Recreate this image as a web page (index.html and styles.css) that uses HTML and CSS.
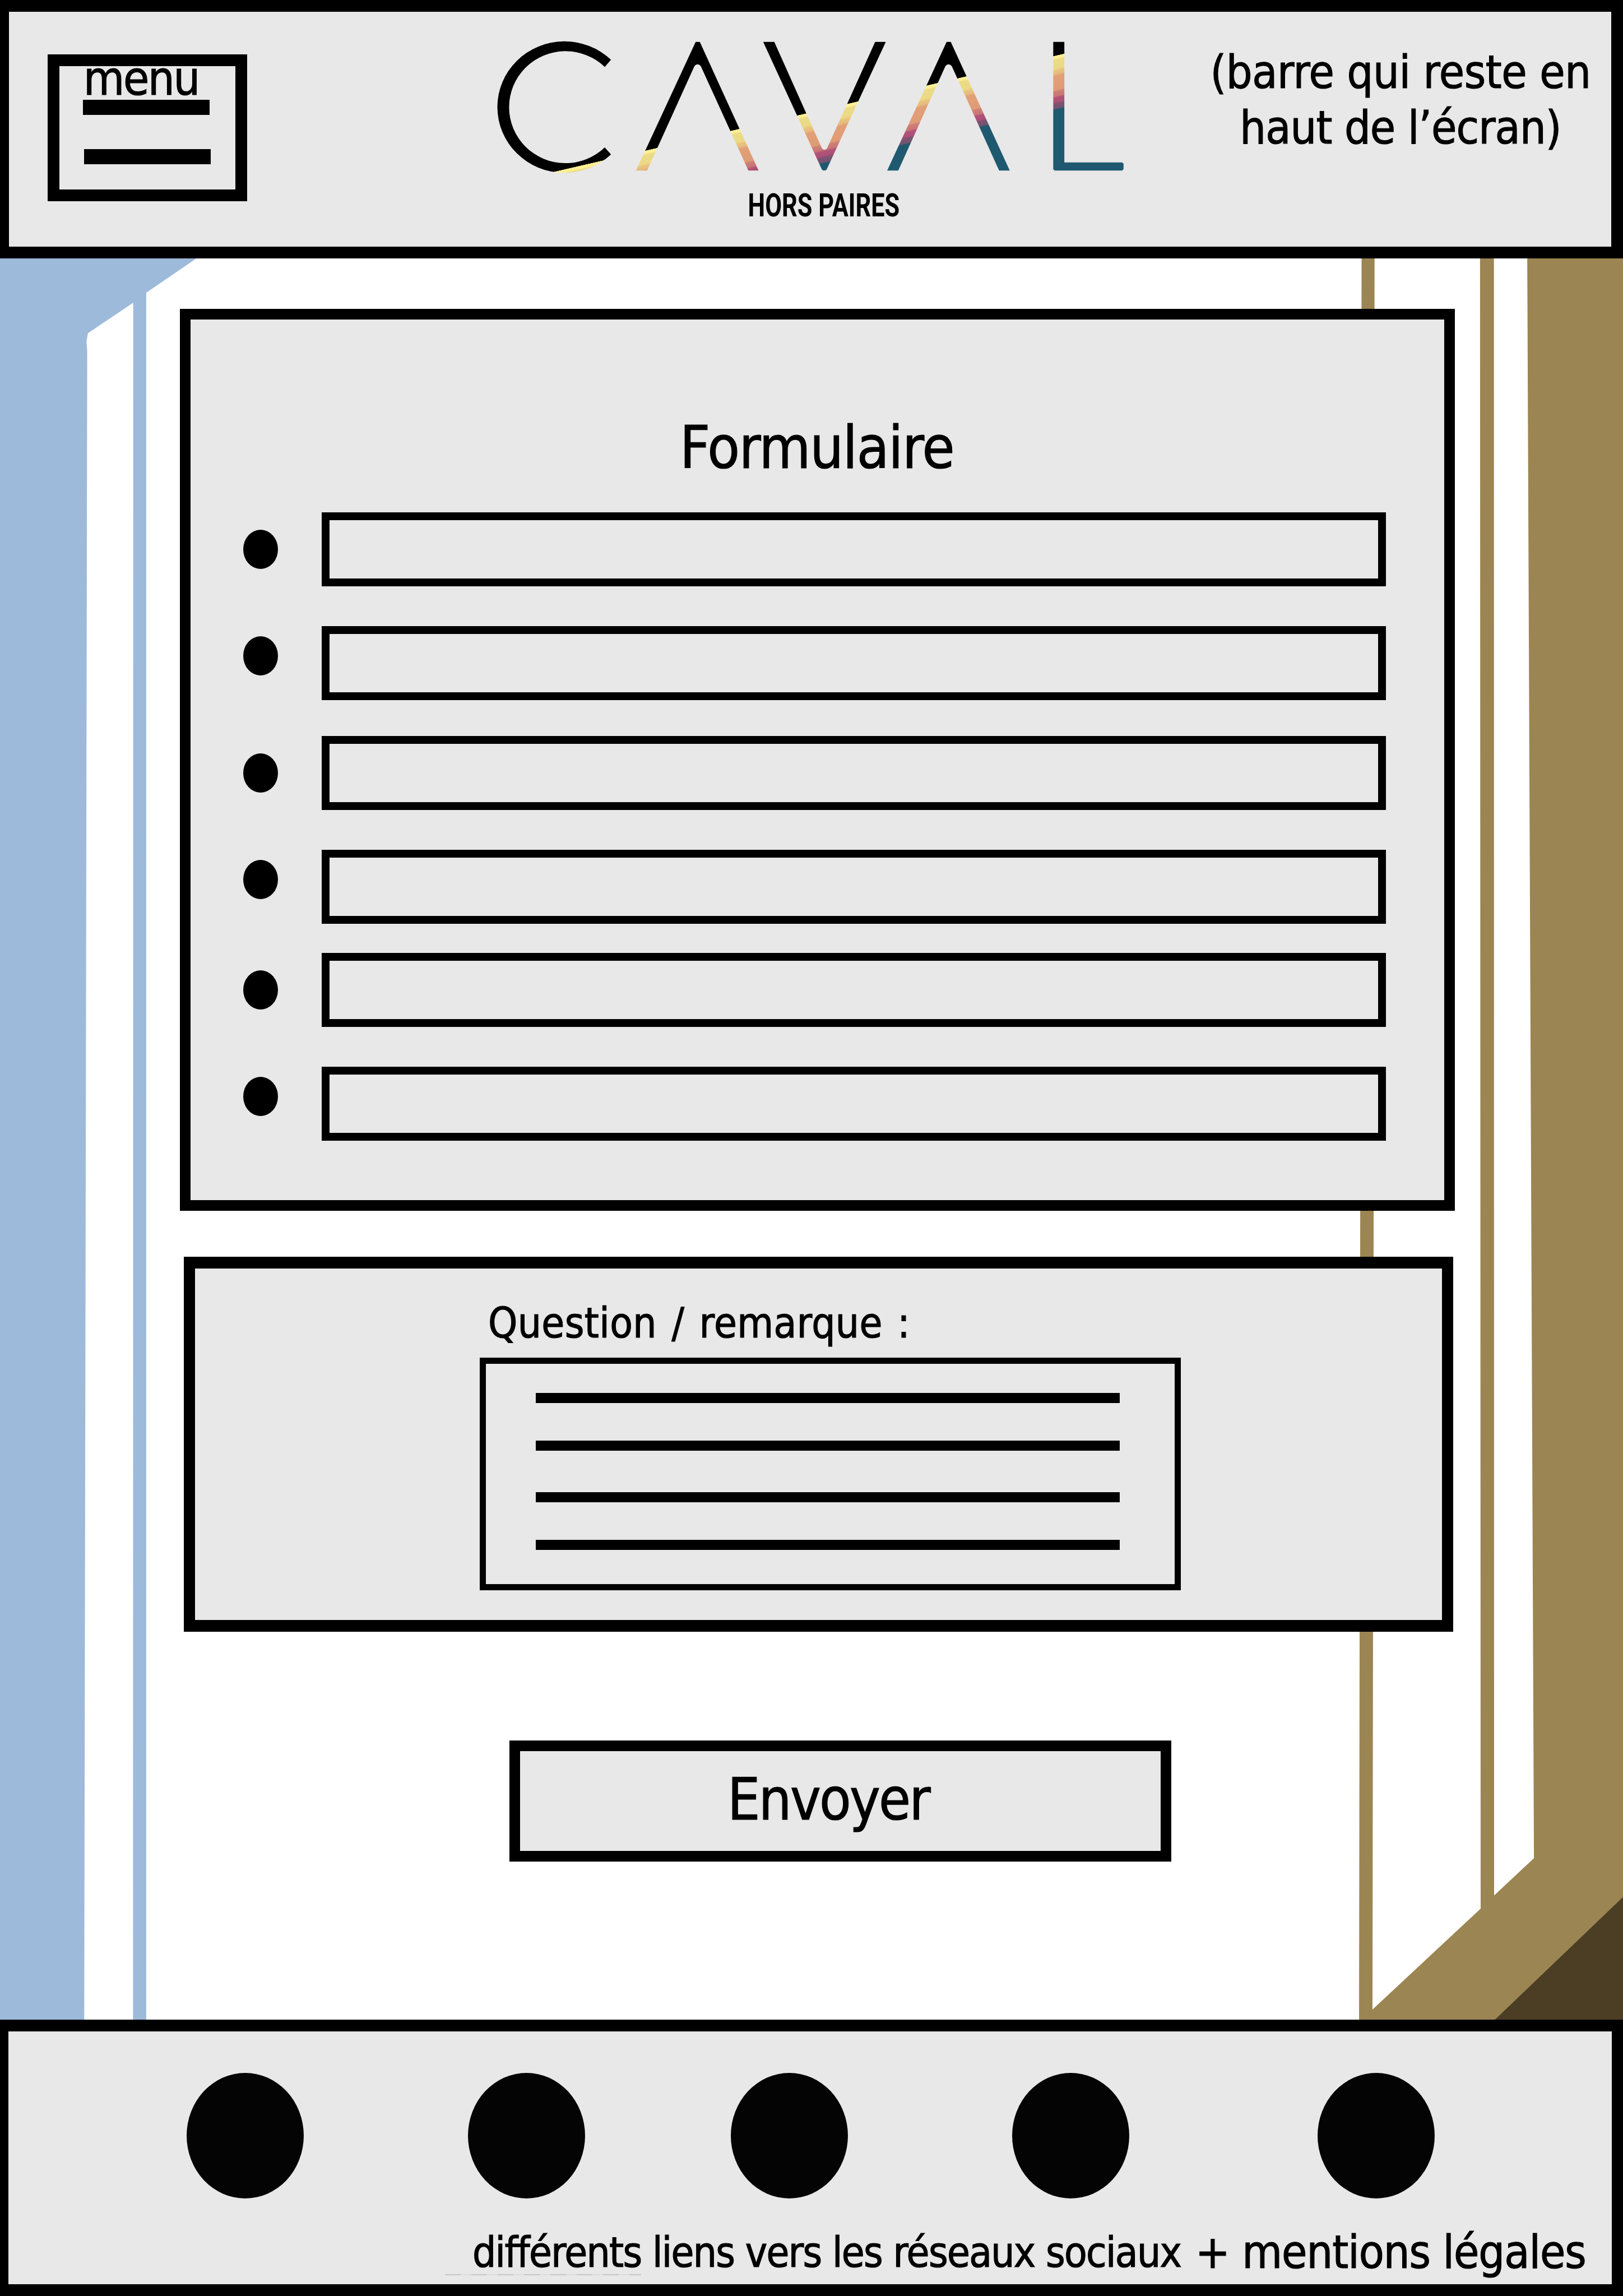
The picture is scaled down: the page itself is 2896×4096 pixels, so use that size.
FILE: index.html
```html
<!DOCTYPE html>
<html lang="fr">
<head>
<meta charset="utf-8">
<title>Caval – Formulaire</title>
<link rel="stylesheet" href="styles.css">
</head>
<body>
<svg class="backdrop" viewBox="0 0 3508 4961" preserveAspectRatio="none" aria-hidden="true">
  <path class="blue" fill-rule="evenodd" d="M0 540H445.500L425 558L316 632.500V4380H0ZM288 654L190 720L187 737L188.500 760L182 4380H287.500Z"/>
  <path class="sand" d="M2943 540H2971L2969 2650L2966.500 4342L3200.300 4124L3199 540H3229L3229.400 4095.500L3315.500 4015L3301 540H3508V4380H2937.500Z"/>
  <path class="dark" d="M3508 4099V4380H3214.500Z"/>
</svg>

<header class="topbar">
  <button class="menu" type="button">
    <span class="menu-label">menu</span>
    <span class="menu-bar"></span>
    <span class="menu-bar menu-bar-low"></span>
  </button>
  <svg class="logo" viewBox="1074 89 1354 401" role="img" aria-label="Caval hors paires">
    <defs>
      <linearGradient id="sunset" gradientUnits="userSpaceOnUse" x1="0" y1="0" x2="0" y2="120" gradientTransform="matrix(1 -0.2315 0 1 0 647.5)">
        <stop offset="0" stop-color="#000"/>
        <stop offset="0.005" stop-color="#fff194"/>
        <stop offset="0.05" stop-color="#fdee92"/>
        <stop offset="0.08" stop-color="#eadb86"/>
        <stop offset="0.23" stop-color="#ecd985"/>
        <stop offset="0.27" stop-color="#e8c57f"/>
        <stop offset="0.33" stop-color="#e6ba7d"/>
        <stop offset="0.37" stop-color="#e2a077"/>
        <stop offset="0.62" stop-color="#df9b76"/>
        <stop offset="0.65" stop-color="#cd7f76"/>
        <stop offset="0.73" stop-color="#c97576"/>
        <stop offset="0.76" stop-color="#b25378"/>
        <stop offset="0.84" stop-color="#ab5075"/>
        <stop offset="0.87" stop-color="#7f5172"/>
        <stop offset="0.95" stop-color="#72546f"/>
        <stop offset="0.98" stop-color="#1f596f"/>
      </linearGradient>
    </defs>
    <g fill="url(#sunset)">
      <path d="M1320 128.500A145 142 0 1 0 1320 333L1306.500 318A122 121 0 1 1 1306.500 144Z"/>
      <path d="M1503 90H1512L1639 368H1617L1514 142Q1507 135 1500.500 142L1398 368H1374Z"/>
      <path d="M1649 90H1673L1776 320Q1781.500 326 1787 320L1891 90H1914L1786 366Q1781 370 1776 366Z"/>
      <path d="M2045.500 90H2054.500L2182 368H2159L2056.500 142Q2049.500 135 2043 142L1941 368H1917Z"/>
      <path d="M2276 90H2300V350.500H2425L2428 353V365L2425 368H2279L2276 365Z"/>
    </g>
    <text class="tagline" x="1616" y="466.500" textLength="328" lengthAdjust="spacingAndGlyphs">HORS PAIRES</text>
  </svg>
  <p class="note"><span class="note-line">(barre qui reste en</span><span class="note-line note-line-end">haut de l’écran)</span></p>
</header>

<main class="content">
  <form class="panel form">
    <h1 class="form-title">Formulaire</h1>
    <ul class="fields">
      <li class="field"><span class="dot"></span><span class="input"></span></li>
      <li class="field raised"><span class="dot"></span><span class="input"></span></li>
      <li class="field"><span class="dot"></span><span class="input"></span></li>
      <li class="field raised"><span class="dot"></span><span class="input"></span></li>
      <li class="field tight"><span class="dot"></span><span class="input"></span></li>
      <li class="field raised"><span class="dot"></span><span class="input"></span></li>
    </ul>
  </form>

  <section class="panel question">
    <h2 class="question-label">Question / remarque :</h2>
    <div class="textarea">
      <span class="rule"></span>
      <span class="rule"></span>
      <span class="rule rule-apart"></span>
      <span class="rule"></span>
    </div>
  </section>

  <button class="send" type="button">Envoyer</button>
</main>

<footer class="footer">
  <nav class="socials">
    <span class="social"></span>
    <span class="social"></span>
    <span class="social"></span>
    <span class="social"></span>
    <span class="social"></span>
  </nav>
  <div class="footer-texts">
    <p class="links">différents liens vers les réseaux sociaux</p>
    <p class="legal">+ mentions légales</p>
  </div>
  <div class="squiggle"></div>
</footer>
</body>
</html>
```
FILE: styles.css
```css
* {
  box-sizing: border-box;
}

body {
  position: relative;
  display: flex;
  flex-direction: column;
  width: 2896px;
  height: 4096px;
  margin: 0;
  overflow: hidden;
  background: #fff;
  color: #000;
  font-family: "DejaVu Sans Condensed", "DejaVu Sans", sans-serif;
  font-stretch: semi-condensed;
  -webkit-text-stroke: 1.2px #000;
}

h1, h2, p, ul {
  margin: 0;
  padding: 0;
  font-weight: normal;
  white-space: nowrap;
}

button {
  color: inherit;
  font-family: inherit;
  font-stretch: inherit;
  text-align: left;
}

/* decorative bands behind the page */
.backdrop {
  position: absolute;
  inset: 0;
  z-index: -1;
  width: 100%;
  height: 100%;
}
.blue { fill: #9dbada; }
.sand { fill: #9b8552; }
.dark { fill: #4b3e25; }

/* top bar */
.topbar {
  display: flex;
  align-items: flex-start;
  flex: none;
  height: 461px;
  border: solid #000;
  border-width: 21px 21px 21px 16px;
  background: #e8e8e8;
}

.menu {
  display: flex;
  flex-direction: column;
  flex: none;
  width: 356px;
  height: 262px;
  margin: 76px 0 0 69px;
  padding: 2.4px 0 0 42px;
  border: 21px solid #000;
  background: none;
}
.menu-label {
  padding-left: 1px;
  font-size: 83.5px;
  line-height: 40px;
  letter-spacing: -2.2px;
}
.menu-bar {
  width: 226px;
  height: 27px;
  margin-top: 17.3px;
  background: #000;
}
.menu-bar-low {
  margin: 61.6px 0 0 1.5px;
}

.logo {
  flex: none;
  width: 1118px;
  height: 331px;
  margin: 52.5px 0 0 446px;
  overflow: visible;
}
.tagline {
  font-family: Roboto, sans-serif;
  font-size: 69px;
  font-weight: 700;
  font-stretch: normal;
  -webkit-text-stroke: 0;
}

.note {
  display: flex;
  flex-direction: column;
  width: 720px;
  margin: 58.4px 0 0 134px;
  font-size: 82px;
  line-height: 99px;
  text-align: center;
}
.note-line { letter-spacing: -0.4px; }
.note-line-end { letter-spacing: -0.9px; }

/* main column */
.content {
  display: flex;
  flex-direction: column;
  align-items: flex-start;
  flex: none;
  height: 3142px;
  padding-top: 90px;
}

.panel {
  flex: none;
  border: solid #000;
  background: #e8e8e8;
}

.form {
  width: 2275px;
  height: 1609px;
  margin-left: 321px;
  padding-top: 173.5px;
  border-width: 19px;
}
.form-title {
  padding-left: 873px;
  font-size: 105px;
  line-height: 110px;
  letter-spacing: -1.3px;
}
.fields {
  padding: 60.5px 0 0 93.6px;
  list-style: none;
}
.field {
  display: flex;
  align-items: center;
  gap: 78px;
  height: 132px;
  margin-top: 64.5px;
}
.field:first-child { margin-top: 0; }
.field.raised { margin-top: 70.7px; }
.field.tight { margin-top: 52px; }
.dot {
  width: 62px;
  height: 70px;
  border-radius: 50%;
  background: #000;
}
.raised .dot { margin-bottom: 26px; }
.input {
  width: 1899px;
  height: 132px;
  border: 14px solid #000;
}

.question {
  width: 2265px;
  height: 669px;
  margin: 82px 0 0 328px;
  padding: 57px 0 0 508.4px;
  border-width: 21px 20px;
}
.question-label {
  padding-left: 14.5px;
  font-size: 74px;
  line-height: 80px;
  letter-spacing: 0.4px;
  word-spacing: 5px;
}
.textarea {
  width: 1251px;
  height: 415px;
  margin-top: 22px;
  padding: 52px 0 0 88.2px;
  border: 11px solid #000;
}
.rule {
  display: block;
  width: 1042px;
  height: 17.5px;
  margin-bottom: 67.5px;
  background: #000;
}
.rule-apart { margin-top: 74.5px; }

.send {
  width: 1181px;
  height: 216px;
  margin: 194px 0 0 909px;
  padding: 0 0 7px 370px;
  border: 19px solid #000;
  background: #e8e8e8;
  font-size: 103px;
  line-height: 120px;
  letter-spacing: -2.7px;
}

/* bottom bar */
.footer {
  position: relative;
  flex: none;
  height: 493px;
  padding-top: 74px;
  border: solid #000;
  border-width: 21px 20px 21px 15px;
  background: #e8e8e8;
}
.socials {
  display: grid;
  grid-template-columns: 502px 469px 501.5px 545.5px 209px;
  padding-left: 318px;
}
.social {
  width: 209px;
  height: 224px;
  border-radius: 50%;
  background: #040404;
}
.footer-texts {
  display: flex;
  margin-top: 51px;
  padding-left: 828px;
  line-height: 90px;
}
.links {
  width: 1290px;
  font-size: 74px;
  letter-spacing: -1.68px;
}
.legal {
  font-size: 82px;
  letter-spacing: -1px;
}
/* spell-check mark left under the links caption */
.squiggle {
  position: absolute;
  left: 779px;
  bottom: 16px;
  width: 350px;
  height: 2px;
  background: repeating-linear-gradient(90deg, #c6c6c6 0 28px, #dcdcdc 28px 47px);
}
```
